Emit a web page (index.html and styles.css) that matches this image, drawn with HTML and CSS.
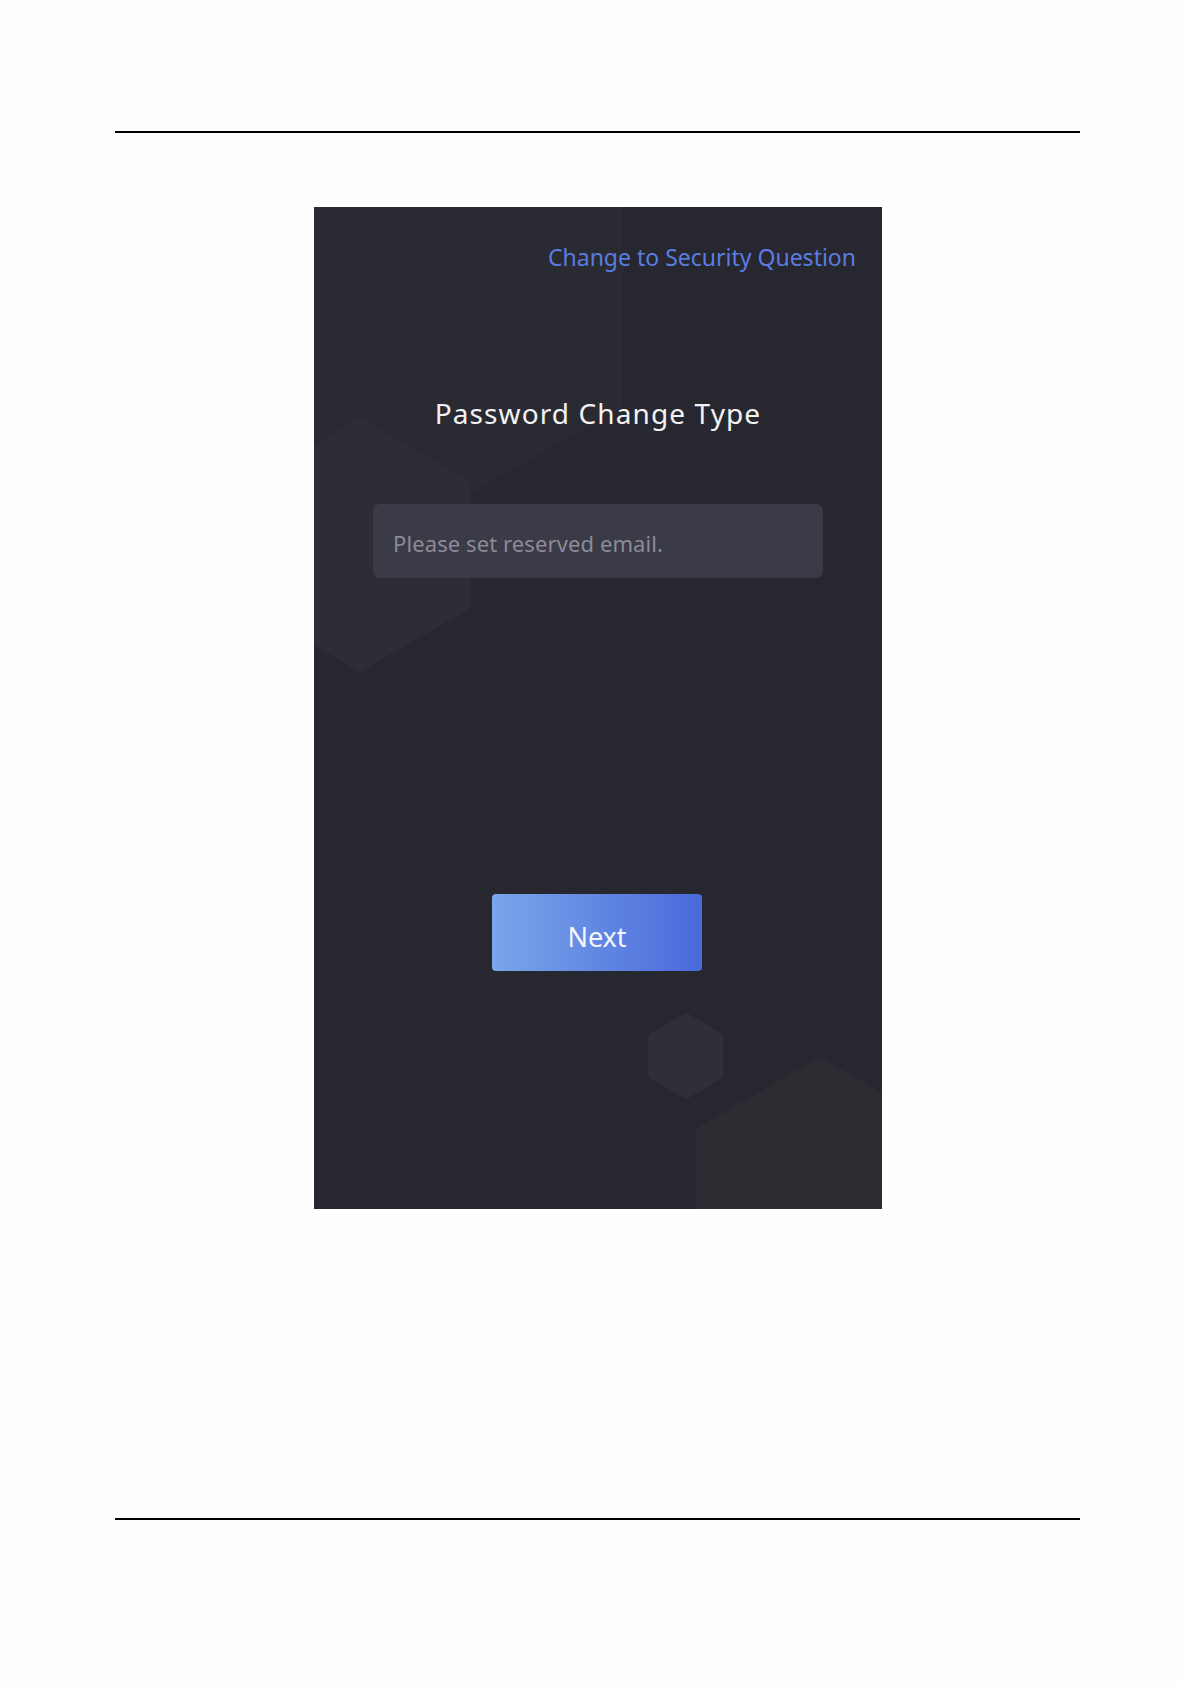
FILE: index.html
```html
<!DOCTYPE html>
<html lang="en">
<head>
    <meta charset="UTF-8">
    <title>Password Change Type</title>
    <link rel="stylesheet" href="styles.css">
</head>
<body>
<div class="page">
    <div class="header"></div>
    <div class="screen">
        <svg class="screen-bg" viewBox="0 0 568 1002" preserveAspectRatio="none">
            <polygon class="hex-faint" points="86,-184 308,-56 308,200 86,328 -136,200 -136,-56"/>
            <polygon class="hex-left" points="46,211 156,274.5 156,401.5 46,465 -64,401.5 -64,274.5"/>
            <polygon class="hex-small" points="372,805.5 409.7,827.8 409.7,870.2 372,892.5 334.3,870.2 334.3,827.8"/>
            <polygon class="hex-big" points="506,850 629.8,921.5 629.8,1064.5 506,1136 382.2,1064.5 382.2,921.5"/>
        </svg>
        <div class="screen-body">
            <div class="switch-link">Change to Security Question</div>
            <div class="screen-title">Password Change Type</div>
            <div class="email-input">Please set reserved email.</div>
            <div class="btn-row">
                <div class="btn-next">Next</div>
            </div>
        </div>
    </div>
    <div class="footer"></div>
</div>
</body>
</html>
```

FILE: styles.css
```css
body{
    margin: 0;
    background: #fefefe;
    font-family: "Noto Sans", "Open Sans", sans-serif;
}
.page{
    padding: 0 101px 0 115px;
}
.header{
    height: 131px;
    border-bottom: 2px solid #000;
}
.screen{
    position: relative;
    width: 568px;
    height: 1002px;
    margin: 74px 0 0 199px;
    background: #27272f;
    overflow: hidden;
}
.screen-bg{
    position: absolute;
    left: 0;
    top: 0;
    width: 568px;
    height: 1002px;
}
.hex-faint{
    fill: #2a2a32;
}
.hex-left{
    fill: #2d2d35;
}
.hex-small{
    fill: #2f2f38;
}
.hex-big{
    fill: #2c2c33;
}
.screen-body{
    position: relative;
    display: flex;
    flex-direction: column;
    padding: 35px 26px 0 59px;
}
.switch-link{
    align-self: flex-end;
    font-size: 23px;
    line-height: 30px;
    color: #5b7ce0;
}
.screen-title{
    margin-top: 123px;
    margin-right: 33px;
    font-size: 28px;
    line-height: 36px;
    letter-spacing: 1.1px;
    color: #f2f2f2;
    text-align: center;
}
.email-input{
    box-sizing: border-box;
    width: 450px;
    height: 74px;
    margin-top: 73px;
    padding: 24px 19px 0 20px;
    border-radius: 7px;
    background: #3b3a47;
    font-size: 22px;
    line-height: 30px;
    letter-spacing: 0.1px;
    color: #8c8b96;
}
.btn-row{
    display: flex;
    margin-top: 316px;
    padding-left: 119px;
}
.btn-next{
    box-sizing: border-box;
    width: 210px;
    height: 77px;
    padding-top: 26px;
    border-radius: 4px;
    background: linear-gradient(90deg, #7aa6ea, #4a69da);
    font-size: 27px;
    line-height: 34px;
    color: #f4f6ff;
    text-align: center;
}
.footer{
    margin-top: 309px;
    border-top: 2px solid #000;
}
```
